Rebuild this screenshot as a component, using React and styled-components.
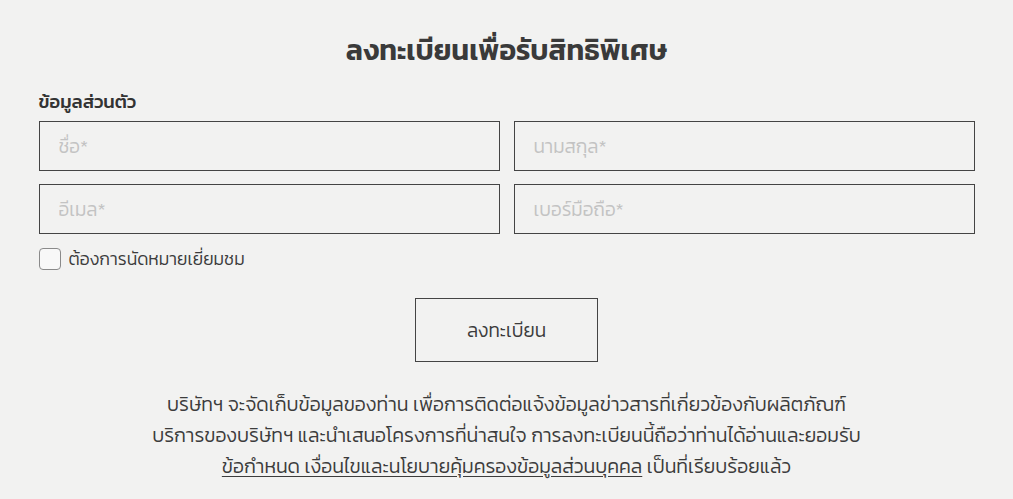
import React from "react";
import styled, { createGlobalStyle } from "styled-components";

const GlobalStyle = createGlobalStyle`
html, body {
margin: 0;
padding: 0;
background: #f2f2f1;
font-family: Kanit, "Noto Sans Thai", sans-serif;
font-weight: 300;
color: #3c3c3c;
}
`;

const Page = styled.div`
width: 936px;
margin: 0 auto;
padding-top: 30px;
`;

const Title = styled.h1`
margin: 0;
text-align: center;
font-size: 28.5px;
font-weight: 600;
line-height: 40px;
color: #3a3a3a;
`;

const SectionLabel = styled.div`
margin-top: 20px;
font-size: 18.5px;
font-weight: 500;
line-height: 24px;
color: #333;
`;

const Grid = styled.div`
margin-top: 7px;
display: grid;
grid-template-columns: 1fr 1fr;
gap: 13px 14px;
`;

const Input = styled.input`
box-sizing: border-box;
width: 100%;
height: 50px;
border: 1px solid #444;
background: transparent;
padding: 0 19px;
font-family: inherit;
font-weight: 300;
font-size: 19px;
color: #333;
outline: none;
&::placeholder {
color: #c3c3c3;
}
`;

const CheckRow = styled.label`
margin-top: 14px;
display: flex;
align-items: center;
gap: 8px;
font-size: 17.6px;
line-height: 22px;
color: #3c3c3c;
`;

const Box = styled.span`
box-sizing: border-box;
width: 22px;
height: 22px;
border: 1px solid #8a8a8a;
border-radius: 4px;
background: #f8f8f8;
`;

const ButtonWrap = styled.div`
margin-top: 28px;
display: flex;
justify-content: center;
`;

const Submit = styled.button`
width: 183px;
height: 64px;
border: 1px solid #444;
background: transparent;
font-family: inherit;
font-weight: 300;
font-size: 19px;
color: #3c3c3c;
`;

const Note = styled.p`
margin: 27px 0 0;
text-align: center;
font-size: 19.5px;
line-height: 31px;
color: #3c3c3c;
`;

const Link = styled.a`
color: inherit;
text-decoration: underline;
text-underline-offset: 3px;
`;

export default function App() {
    return (
        <Page>
            <GlobalStyle />
            <Title>ลงทะเบียนเพื่อรับสิทธิพิเศษ</Title>
            <SectionLabel>ข้อมูลส่วนตัว</SectionLabel>
            <Grid>
                <Input placeholder="ชื่อ*" />
                <Input placeholder="นามสกุล*" />
                <Input placeholder="อีเมล*" />
                <Input placeholder="เบอร์มือถือ*" />
            </Grid>
            <CheckRow>
                <Box />
                ต้องการนัดหมายเยี่ยมชม
            </CheckRow>
            <ButtonWrap>
                <Submit>ลงทะเบียน</Submit>
            </ButtonWrap>
            <Note>
                บริษัทฯ จะจัดเก็บข้อมูลของท่าน เพื่อการติดต่อแจ้งข้อมูลข่าวสารที่เกี่ยวข้องกับผลิตภัณฑ์<br />
                บริการของบริษัทฯ และนำเสนอโครงการที่น่าสนใจ การลงทะเบียนนี้ถือว่าท่านได้อ่านและยอมรับ<br />
                <Link href="#">ข้อกำหนด เงื่อนไขและนโยบายคุ้มครองข้อมูลส่วนบุคคล</Link> เป็นที่เรียบร้อยแล้ว
            </Note>
        </Page>
    );
}
